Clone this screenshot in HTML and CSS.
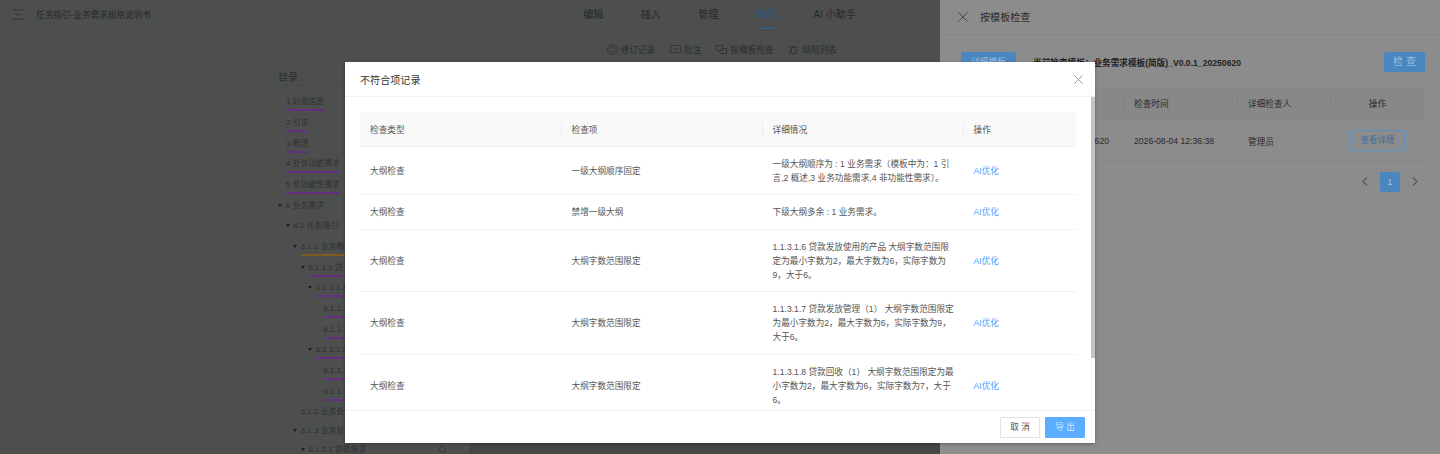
FILE: index.html
```html
<!DOCTYPE html>
<html lang="zh-CN">
<head>
    <meta charset="utf-8">
    <title>不符合项记录</title>
    <link rel="stylesheet" href="styles.css">
</head>
<body>
    <div class="app">
        <div class="main">
            <div class="topbar">
                <svg class="menu-icon" width="11" height="11" viewBox="0 0 11 11"><path d="M0 1h11M2.5 5.5h6M0 10h11" /></svg>
                <div class="doc-title">任务指引-业务需求规格说明书</div>
                <div class="tabs">
                    <span class="tab">编辑</span>
                    <span class="tab">插入</span>
                    <span class="tab">管理</span>
                    <span class="tab active">审阅</span>
                    <span class="tab">AI 小助手</span>
                </div>
            </div>
            <div class="toolbar">
                <span class="tool">
                    <svg width="11" height="11" viewBox="0 0 11 11"><circle cx="5.5" cy="5.5" r="5" /><circle cx="5.5" cy="5.5" r="2.6" /></svg>修订记录
                </span>
                <span class="tool">
                    <svg width="11" height="11" viewBox="0 0 11 11"><path d="M.5 1.5h10v7H3.5l-1.5 1v-1H.5zM3 5h5" /></svg>批注
                </span>
                <span class="tool">
                    <svg width="11" height="11" viewBox="0 0 11 11"><path d="M.5 1.5h6v5h-6zM4 6.5v3h6.500v-5H6.500" /></svg>按模板检查
                </span>
                <span class="tool">
                    <svg width="11" height="11" viewBox="0 0 11 11"><path d="M3.500 3.500h4v4.500a2 2 0 0 1-4 0zM4 3.500a1.500 1.500 0 0 1 3 0M1 2.500l2.500 2M10 2.500l-2.500 2M.5 6.500h3M10.500 6.500h-3M1 10l2.500-1.500M10 10l-2.500-1.500" /></svg>缺陷列表
                </span>
            </div>
            <div class="content">
                <div class="toc">
                    <div class="toc-title">目录</div>
                    <div class="toc-row"><span class="no-caret"></span><a>1 封面信息</a></div>
                    <div class="toc-row"><span class="no-caret"></span><a>2 引言</a></div>
                    <div class="toc-row"><span class="no-caret"></span><a>3 概述</a></div>
                    <div class="toc-row"><span class="no-caret"></span><a>4 业务功能需求</a></div>
                    <div class="toc-row"><span class="no-caret"></span><a>5 非功能性需求</a></div>
                    <div class="toc-row"><span class="caret"></span><a class="plain">6 业务需求</a></div>
                    <div class="toc-row lv1"><span class="caret"></span><a class="plain">6.1 任务指引</a></div>
                    <div class="toc-row lv2"><span class="caret"></span><a class="orange">6.1.1 业务概</a></div>
                    <div class="toc-row lv3"><span class="caret"></span><a>6.1.1.1 贷</a></div>
                    <div class="toc-row lv4"><span class="caret"></span><a>6.1.1.1.1</a></div>
                    <div class="toc-row lv5"><span class="no-caret"></span><a>6.1.1.1</a></div>
                    <div class="toc-row lv5"><span class="no-caret"></span><a>6.1.1.1</a></div>
                    <div class="toc-row lv4"><span class="caret"></span><a>6.1.1.1.2</a></div>
                    <div class="toc-row lv5"><span class="no-caret"></span><a>6.1.1.1</a></div>
                    <div class="toc-row lv5"><span class="no-caret"></span><a>6.1.1.1</a></div>
                    <div class="toc-row lv2 tight"><span class="no-caret"></span><a class="plain">6.1.2 业务处</a></div>
                    <div class="toc-row lv2 tight"><span class="caret"></span><a class="plain">6.1.3 业务处</a></div>
                    <div class="toc-row lv3 tight"><span class="caret"></span><a class="plain">6.1.3.1 贷款借贷</a><span class="toc-dot"></span></div>
                </div>
                <div class="doc"></div>
            </div>
        </div>

        <div class="drawer">
            <div class="drawer-head">
                <svg class="x-icon" width="10" height="10" viewBox="0 0 10 10"><path d="M.5.5l9 9M9.500.5l-9 9" /></svg>
                <span class="drawer-title">按模板检查</span>
            </div>
            <div class="drawer-actions">
                <span class="btn-blue wide">详细模板</span>
                <span class="current">当前检查模板：业务需求模板(简版)_V0.0.1_20250620</span>
                <span class="btn-blue">检 查</span>
            </div>
            <table class="drawer-table">
                <thead>
                    <tr>
                        <th class="col-name">模板名称</th>
                        <th class="col-time">检查时间</th>
                        <th class="col-user">详细检查人</th>
                        <th class="col-op">操作</th>
                    </tr>
                </thead>
                <tbody>
                    <tr>
                        <td class="cell-name">_V0.0.1_20250620</td>
                        <td>2026-08-04 12:36:38</td>
                        <td>管理员</td>
                        <td class="col-op"><span class="btn-outline">查看详情</span></td>
                    </tr>
                </tbody>
            </table>
            <div class="pager">
                <span class="page-arrow">
                    <svg width="6" height="9" viewBox="0 0 6 9"><path d="M5 .5l-4 4 4 4" /></svg>
                </span>
                <span class="page-num">1</span>
                <span class="page-arrow">
                    <svg width="6" height="9" viewBox="0 0 6 9"><path d="M1 .5l4 4-4 4" /></svg>
                </span>
            </div>
        </div>
    </div>

    <div class="modal">
        <div class="modal-head">
            <span class="modal-title">不符合项记录</span>
            <svg class="modal-close" width="9" height="9" viewBox="0 0 9 9"><path d="M.3.3l8.400 8.400M8.700.3l-8.400 8.400" /></svg>
        </div>
        <div class="modal-body">
            <table class="record-table">
                <colgroup>
                    <col class="c1"><col class="c2"><col class="c3"><col class="c4">
                </colgroup>
                <thead>
                    <tr>
                        <th>检查类型</th>
                        <th>检查项</th>
                        <th>详细情况</th>
                        <th>操作</th>
                    </tr>
                </thead>
                <tbody>
                    <tr>
                        <td>大纲检查</td>
                        <td>一级大纲顺序固定</td>
                        <td>一级大纲顺序为 : 1 业务需求（模板中为：1 引<br>言,2 概述,3 业务功能需求,4 非功能性需求）。</td>
                        <td><a class="link">AI优化</a></td>
                    </tr>
                    <tr>
                        <td>大纲检查</td>
                        <td>禁增一级大纲</td>
                        <td>下级大纲多余 : 1 业务需求。</td>
                        <td><a class="link">AI优化</a></td>
                    </tr>
                    <tr>
                        <td>大纲检查</td>
                        <td>大纲字数范围限定</td>
                        <td>1.1.3.1.6 贷款发放使用的产品 大纲字数范围限<br>定为最小字数为2，最大字数为6，实际字数为<br>9，大于6。</td>
                        <td><a class="link">AI优化</a></td>
                    </tr>
                    <tr>
                        <td>大纲检查</td>
                        <td>大纲字数范围限定</td>
                        <td>1.1.3.1.7 贷款发放管理（1） 大纲字数范围限定<br>为最小字数为2，最大字数为6，实际字数为9，<br>大于6。</td>
                        <td><a class="link">AI优化</a></td>
                    </tr>
                    <tr>
                        <td>大纲检查</td>
                        <td>大纲字数范围限定</td>
                        <td>1.1.3.1.8 贷款回收（1） 大纲字数范围限定为最<br>小字数为2，最大字数为6，实际字数为7，大于<br>6。</td>
                        <td><a class="link">AI优化</a></td>
                    </tr>
                </tbody>
            </table>
            <div class="scroll-thumb"></div>
        </div>
        <div class="modal-foot">
            <span class="btn-cancel">取 消</span>
            <span class="btn-export">导 出</span>
        </div>
    </div>
</body>
</html>
```

FILE: styles.css
```css
* {
    box-sizing: border-box;
}

body {
    margin: 0;
    height: 100vh;
    overflow: hidden;
    position: relative;
    font-family: "Liberation Sans", "Noto Sans CJK SC", sans-serif;
    font-size: 8.64px;
    color: #2b2b2b;
}

.app {
    display: flex;
    height: 100%;
}

/* Dimmed page behind the drawer */
.main {
    width: 940px;
    display: flex;
    flex-direction: column;
    background-color: #4d4f4e;
}

.topbar {
    height: 30px;
    display: flex;
    align-items: center;
    padding-left: 13px;
    border-bottom: 1px solid #484a49;
    flex-shrink: 0;
}

.menu-icon {
    margin-right: 12px;
    fill: none;
    stroke: #353736;
    stroke-width: 1;
}

.doc-title {
    font-size: 8.64px;
    color: #262827;
    padding-bottom: 1px;
}

.tabs {
    display: flex;
    gap: 37.4px;
    margin-left: auto;
    margin-right: 84px;
    height: 100%;
}

.tab {
    font-size: 10.08px;
    line-height: 30px;
    color: #262827;
    position: relative;
}

.tab.active {
    color: #2a5a85;
}

.tab.active::after {
    content: "";
    position: absolute;
    left: 2px;
    right: 2px;
    bottom: 0;
    height: 1px;
    background-color: #2a6a9e;
}

.toolbar {
    height: 32px;
    display: flex;
    align-items: center;
    justify-content: flex-end;
    gap: 15px;
    padding-right: 103px;
    padding-top: 6px;
    flex-shrink: 0;
    color: #2b2d2c;
}

.tool {
    display: flex;
    align-items: center;
    gap: 3px;
}

.tool svg {
    fill: none;
    stroke: #2e302f;
    stroke-width: 0.8;
}

.content {
    flex: 1;
    display: flex;
}

.toc {
    margin-left: 278px;
    width: 191px;
    padding-top: 9px;
    font-size: 7.92px;
    color: #2e302f;
}

.toc-title {
    font-size: 10.08px;
    line-height: 14px;
    margin-bottom: 7px;
    border-bottom: 1px solid #484a49;
}

.toc-row {
    height: 21px;
    display: flex;
    align-items: flex-start;
    padding-top: 2px;
    white-space: nowrap;
}

.toc-row:nth-child(3n+1) {
    height: 20px;
}

.toc-row.tight {
    height: 19px;
}

.toc-row a {
    line-height: 11px;
    padding-top: 1px;
    padding-bottom: 2px;
    border-bottom: 2px solid #642f7e;
}

.toc-row a.plain {
    border-bottom-color: transparent;
}

.toc-row a.orange {
    border-bottom-color: #7d5c22;
}

.lv1 { padding-left: 7.5px; }
.lv2 { padding-left: 15px; }
.lv3 { padding-left: 22.5px; }
.lv4 { padding-left: 30px; }
.lv5 { padding-left: 37.5px; }

.no-caret {
    width: 8px;
    flex-shrink: 0;
}

.caret {
    width: 8px;
    flex-shrink: 0;
    margin-top: 5px;
}

.caret::before {
    content: "";
    display: block;
    width: 0;
    height: 0;
    border-left: 2.5px solid transparent;
    border-right: 2.5px solid transparent;
    border-top: 3px solid #1e201f;
}

.toc-dot {
    width: 7px;
    height: 7px;
    margin-top: 3px;
    margin-left: auto;
    margin-right: 23px;
    border: 1px solid #363837;
    border-radius: 50%;
}

.doc {
    flex: 1;
    background-color: #454746;
}

/* Drawer on the right */
.drawer {
    width: 500px;
    background-color: #8c8c8c;
    color: #1f1f1f;
}

.drawer-head {
    height: 35px;
    display: flex;
    align-items: center;
    padding-left: 18px;
    border-bottom: 1px solid #868686;
}

.x-icon {
    fill: none;
    stroke: #444;
    margin-right: 12px;
}

.drawer-title {
    font-size: 10.08px;
    color: #2a2a2a;
    padding-bottom: 2px;
}

.drawer-actions {
    display: flex;
    align-items: center;
    margin: 17px 15px 15px 21px;
    height: 20px;
}

.btn-blue {
    width: 41px;
    height: 20px;
    line-height: 20px;
    text-align: center;
    font-size: 10px;
    border-radius: 1px;
    background-color: #4a87bf;
    color: #9dbcd8;
}

.btn-blue.wide {
    width: 55px;
    font-size: 8.64px;
}

.current {
    margin-left: 17px;
    margin-right: auto;
    font-size: 8.64px;
    font-weight: bold;
    color: #222;
}

.drawer-table {
    margin-left: 21px;
    width: 464px;
    table-layout: fixed;
    border-collapse: collapse;
}

.drawer-table th {
    height: 33px;
    padding: 0 11px 1px;
    text-align: left;
    font-weight: normal;
    background-color: #888;
    color: #2b2b2b;
    position: relative;
}

.drawer-table th + th::before {
    content: "";
    position: absolute;
    left: 0;
    top: 10px;
    height: 13px;
    width: 1px;
    background-color: #7f7f7f;
}

.drawer-table td {
    height: 41px;
    padding: 1px 11px 0;
    border-bottom: 1px solid #868686;
    color: #2a2a2a;
    white-space: nowrap;
}

.drawer-table td.cell-name {
    text-align: right;
    padding-right: 14px;
}

.drawer-table th.col-op,
.drawer-table td.col-op {
    text-align: center;
}

.col-name { width: 162px; }
.col-time { width: 114px; }
.col-user { width: 93px; }
.col-op { width: 95px; }

.btn-outline {
    display: inline-block;
    width: 55px;
    height: 21px;
    line-height: 19px;
    text-align: center;
    border: 1px solid #5a92c6;
    border-radius: 1px;
    color: #3e6f9e;
}

.pager {
    display: flex;
    justify-content: flex-end;
    gap: 5px;
    margin: 10px 15px 0 0;
}

.page-arrow,
.page-num {
    width: 20px;
    height: 20px;
    display: flex;
    align-items: center;
    justify-content: center;
}

.page-arrow svg {
    fill: none;
    stroke: #333;
}

.page-num {
    background-color: #4a87bf;
    color: #a9c6de;
    border-radius: 1px;
}

/* Modal on top of everything */
.modal {
    position: absolute;
    left: 345px;
    top: 62px;
    width: 750px;
    height: 381px;
    display: flex;
    flex-direction: column;
    background-color: white;
    box-shadow: 0px 1px 3px rgba(0, 0, 0, 0.3);
}

.modal-head {
    height: 35px;
    flex-shrink: 0;
    display: flex;
    align-items: center;
    justify-content: space-between;
    padding: 0 12px 0 15px;
    border-bottom: 1px solid #f0f0f0;
}

.modal-title {
    font-size: 10.08px;
    color: #333;
}

.modal-close {
    fill: none;
    stroke: #999;
}

.modal-body {
    flex: 1;
    overflow: hidden;
    position: relative;
    padding: 15px 19px 0 15px;
}

.record-table {
    width: 716px;
    table-layout: fixed;
    border-collapse: collapse;
    color: #555;
}

.c1 { width: 201.5px; }
.c2 { width: 201px; }
.c3 { width: 201px; }
.c4 { width: 112.5px; }

.record-table th {
    height: 34px;
    padding: 0 10px;
    text-align: left;
    font-weight: normal;
    background-color: #f9f9f9;
    border-bottom: 1px solid #f2f2f2;
    position: relative;
}

.record-table th + th::before {
    content: "";
    position: absolute;
    left: -1px;
    top: 10px;
    height: 14px;
    width: 1px;
    background-color: #ececec;
}

.record-table td {
    padding: 10.25px 10px 9.25px;
    line-height: 14px;
    border-bottom: 1px solid #f2f2f2;
    white-space: nowrap;
}

.link {
    color: #3f9eff;
}

.scroll-thumb {
    position: absolute;
    top: 0;
    right: 0;
    width: 4px;
    height: 261px;
    background-color: #c1c4c9;
}

.modal-foot {
    height: 33px;
    flex-shrink: 0;
    display: flex;
    align-items: center;
    justify-content: flex-end;
    gap: 5px;
    padding-right: 10px;
    border-top: 1px solid #f0f0f0;
}

.btn-cancel,
.btn-export {
    width: 40px;
    height: 21px;
    line-height: 19px;
    text-align: center;
    border-radius: 1px;
    border: 1px solid #e2e2e2;
    color: #555;
}

.btn-export {
    background-color: #5cadff;
    border-color: #5cadff;
    color: #d5e9ff;
}
```
